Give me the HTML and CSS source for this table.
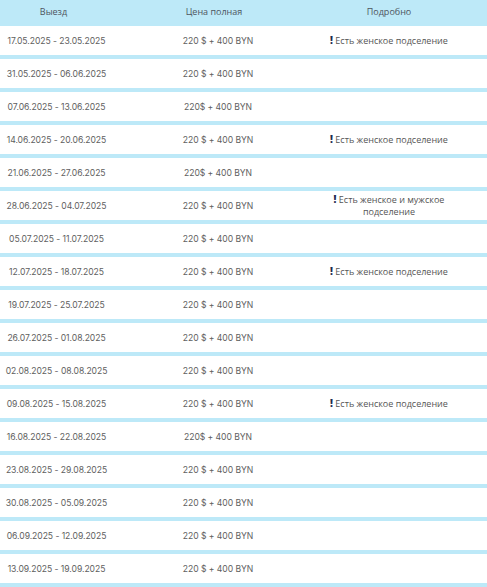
FILE: index.html
```html
<!DOCTYPE html>
<html lang="ru">
<head>
<meta charset="utf-8">
<link rel="stylesheet" href="styles.css">
</head>
<body>
<div class="table">
  <div class="row head">
    <div class="c c1">Выезд</div><div class="c c2">Цена полная</div><div class="c c3">Подробно</div>
  </div>
  <div class="row"><div class="c c1 d">17.05.2025 - 23.05.2025</div><div class="c c2 d">220 $ + 400 BYN</div><div class="c c3 n"><b>!</b> Есть женское подселение</div></div>
  <div class="row"><div class="c c1 d">31.05.2025 - 06.06.2025</div><div class="c c2 d">220 $ + 400 BYN</div><div class="c c3 n"></div></div>
  <div class="row"><div class="c c1 d">07.06.2025 - 13.06.2025</div><div class="c c2 d">220$ + 400 BYN</div><div class="c c3 n"></div></div>
  <div class="row"><div class="c c1 d">14.06.2025 - 20.06.2025</div><div class="c c2 d">220 $ + 400 BYN</div><div class="c c3 n"><b>!</b> Есть женское подселение</div></div>
  <div class="row"><div class="c c1 d">21.06.2025 - 27.06.2025</div><div class="c c2 d">220$ + 400 BYN</div><div class="c c3 n"></div></div>
  <div class="row"><div class="c c1 d">28.06.2025 - 04.07.2025</div><div class="c c2 d">220 $ + 400 BYN</div><div class="c c3 n"><b>!</b> Есть женское и мужское<br>подселение</div></div>
  <div class="row"><div class="c c1 d">05.07.2025 - 11.07.2025</div><div class="c c2 d">220 $ + 400 BYN</div><div class="c c3 n"></div></div>
  <div class="row"><div class="c c1 d">12.07.2025 - 18.07.2025</div><div class="c c2 d">220 $ + 400 BYN</div><div class="c c3 n"><b>!</b> Есть женское подселение</div></div>
  <div class="row"><div class="c c1 d">19.07.2025 - 25.07.2025</div><div class="c c2 d">220 $ + 400 BYN</div><div class="c c3 n"></div></div>
  <div class="row"><div class="c c1 d">26.07.2025 - 01.08.2025</div><div class="c c2 d">220 $ + 400 BYN</div><div class="c c3 n"></div></div>
  <div class="row"><div class="c c1 d">02.08.2025 - 08.08.2025</div><div class="c c2 d">220 $ + 400 BYN</div><div class="c c3 n"></div></div>
  <div class="row"><div class="c c1 d">09.08.2025 - 15.08.2025</div><div class="c c2 d">220 $ + 400 BYN</div><div class="c c3 n"><b>!</b> Есть женское подселение</div></div>
  <div class="row"><div class="c c1 d">16.08.2025 - 22.08.2025</div><div class="c c2 d">220$ + 400 BYN</div><div class="c c3 n"></div></div>
  <div class="row"><div class="c c1 d">23.08.2025 - 29.08.2025</div><div class="c c2 d">220 $ + 400 BYN</div><div class="c c3 n"></div></div>
  <div class="row"><div class="c c1 d">30.08.2025 - 05.09.2025</div><div class="c c2 d">220 $ + 400 BYN</div><div class="c c3 n"></div></div>
  <div class="row"><div class="c c1 d">06.09.2025 - 12.09.2025</div><div class="c c2 d">220 $ + 400 BYN</div><div class="c c3 n"></div></div>
  <div class="row"><div class="c c1 d">13.09.2025 - 19.09.2025</div><div class="c c2 d">220 $ + 400 BYN</div><div class="c c3 n"></div></div>
</div>
</body>
</html>
```
FILE: styles.css
```css
html, body { margin: 0; padding: 0; }
body { background: #ffffff; }
.table {
  background: #bde9f8;
  display: flex;
  flex-direction: column;
  gap: 4px;
  padding-bottom: 4px;
}
.row {
  display: grid;
  grid-template-columns: 113px 210px 132px;
  height: 29px;
  background: #ffffff;
  align-items: center;
  color: #555555;
}
.row.head {
  background: transparent;
  height: 22px;
  align-items: center;
}
.c { text-align: center; }
.head .c {
  font-family: "Open Sans", sans-serif;
  font-size: 9px;
  color: #4d5560;
}
.head .c1 { padding-right: 6px; }
.head .c2 { padding-right: 8px; }
.d {
  font-family: "Inter", sans-serif;
  font-size: 8.6px;
  font-weight: 400;
  color: #5e5e5e;
  letter-spacing: -0.05px;
}
.n {
  font-family: "Open Sans", sans-serif;
  font-size: 9px;
  line-height: 12px;
  color: #555555;
}
.n b { color: #1d2b4f; font-weight: 800; font-size: 10px; }
```
